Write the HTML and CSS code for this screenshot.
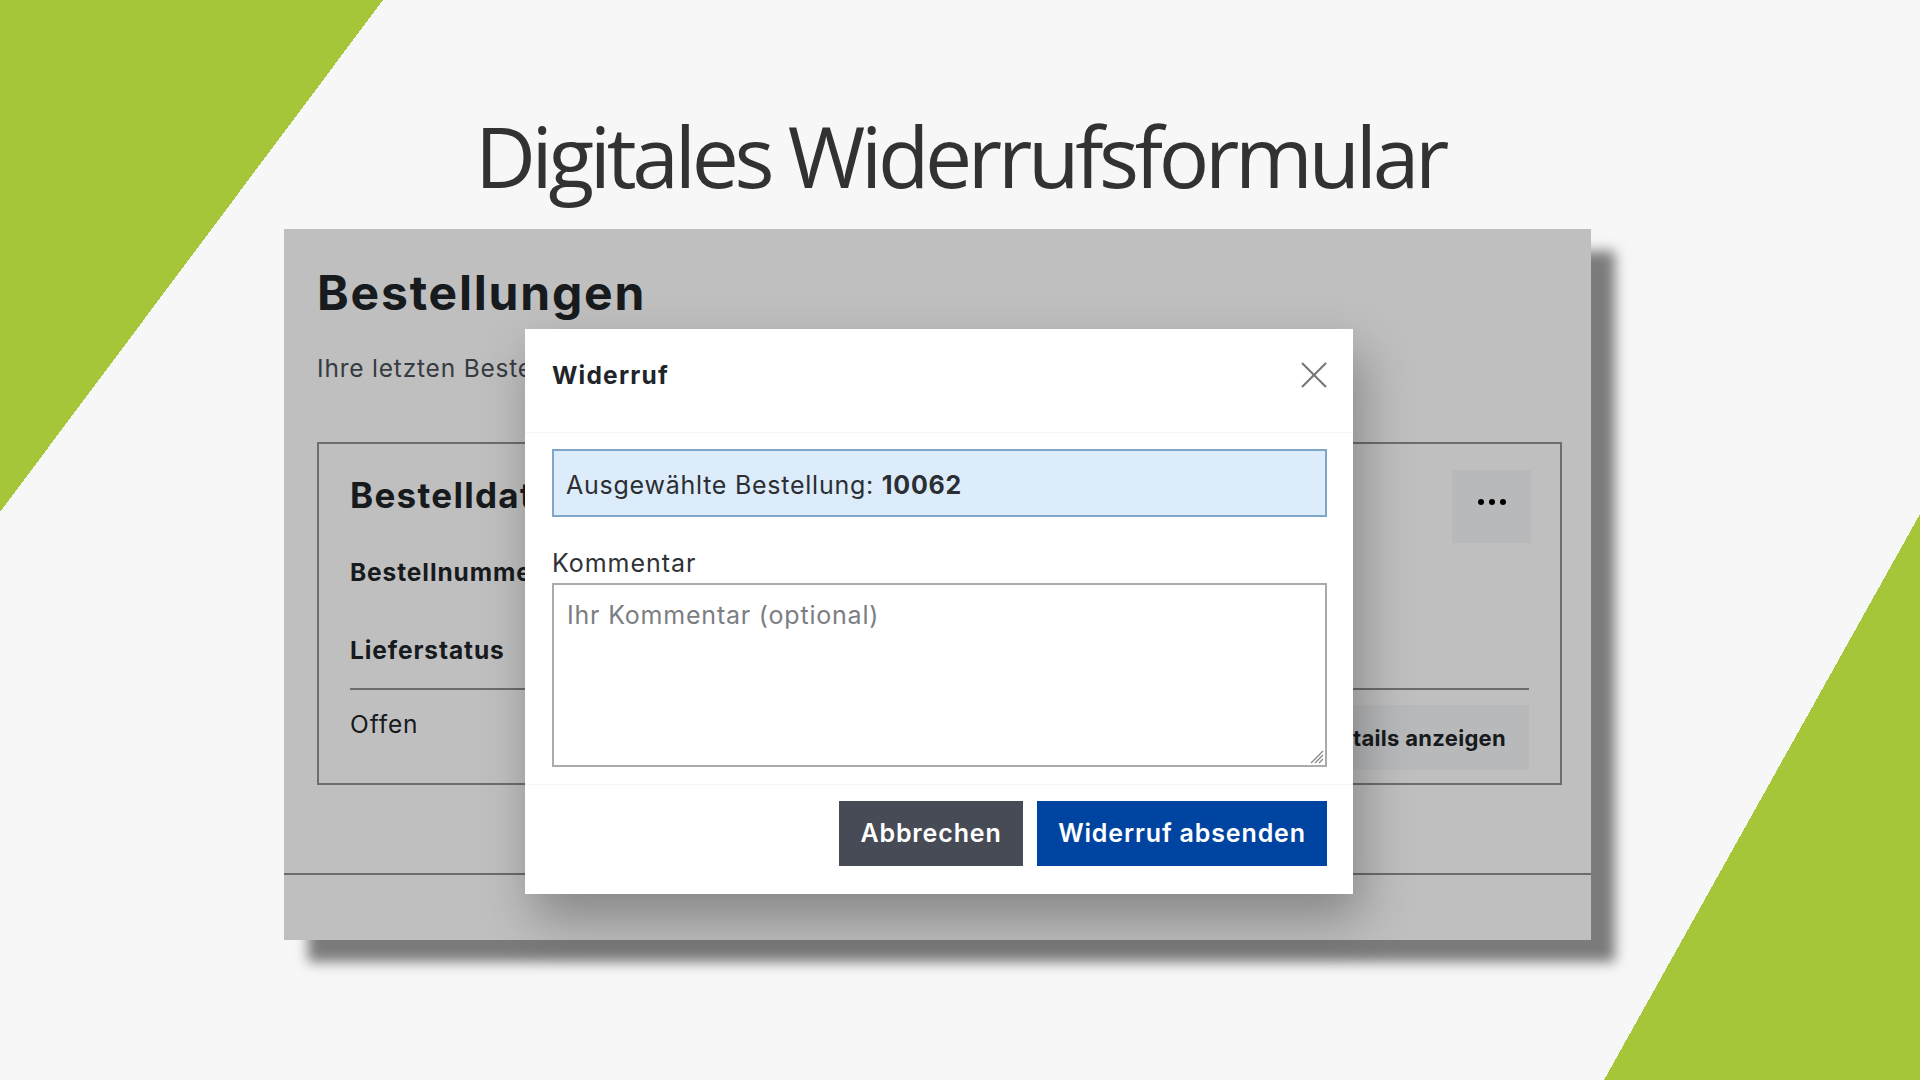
FILE: index.html
```html
<!DOCTYPE html>
<html lang="de">
<head>
<meta charset="utf-8">
<title>Digitales Widerrufsformular</title>
<link rel="stylesheet" href="styles.css">
</head>
<body>
<main class="stage">
  <h1 class="headline">Digitales Widerrufsformular</h1>
  <section class="app">
    <div class="app-body">
      <h2 class="app-title">Bestellungen</h2>
      <p class="app-lead">Ihre letzten Bestellungen im Überblick</p>
      <article class="order">
        <header class="order-head">
          <h3 class="order-date">Bestelldatum: 14.05.2024</h3>
          <button class="menu-btn" aria-label="Mehr"><span></span><span></span><span></span></button>
        </header>
        <div class="order-field first"><span class="order-label">Bestellnummer</span><span class="order-value">10062</span></div>
        <div class="order-field"><span class="order-label">Lieferstatus</span></div>
        <div class="order-foot">
          <span class="order-status">Offen</span>
          <button class="details-btn">Details anzeigen</button>
        </div>
      </article>
    </div>
    <footer class="app-foot"></footer>
    <div class="backdrop"></div>
    <div class="modal" role="dialog" aria-labelledby="mt">
      <div class="modal-head">
        <h4 class="modal-title" id="mt">Widerruf</h4>
        <button class="modal-close" aria-label="Schließen">
          <svg width="26" height="26" viewBox="0 0 26 26"><line x1="1" y1="1" x2="25" y2="25"/><line x1="25" y1="1" x2="1" y2="25"/></svg>
        </button>
      </div>
      <div class="modal-body">
        <div class="selected">Ausgewählte Bestellung: <strong>10062</strong></div>
        <label class="field-label" for="comment">Kommentar</label>
        <div class="field-wrap">
          <textarea id="comment" class="field-input" placeholder="Ihr Kommentar (optional)"></textarea>
          <svg class="grip" width="16" height="16" viewBox="0 0 16 16" aria-hidden="true"><line x1="15" y1="3" x2="3" y2="15"/><line x1="15" y1="7" x2="7" y2="15"/><line x1="15" y1="11" x2="11" y2="15"/></svg>
        </div>
      </div>
      <div class="modal-foot">
        <button class="btn btn-secondary">Abbrechen</button>
        <button class="btn btn-primary">Widerruf absenden</button>
      </div>
    </div>
  </section>
</main>
</body>
</html>
```
FILE: styles.css
```css
* { box-sizing: border-box; }
html, body { margin: 0; }
body {
  width: 1920px;
  height: 1080px;
  overflow: hidden;
  background-color: #f7f7f7;
  background-image:
    linear-gradient(to bottom right, #a6c63a 50%, rgba(166,198,58,0) 50%),
    linear-gradient(to top left, #a6c63a 50%, rgba(166,198,58,0) 50%);
  background-size: 383px 512px, 316px 566px;
  background-position: left top, right bottom;
  background-repeat: no-repeat;
  font-family: Inter, "Liberation Sans", sans-serif;
}
.stage { padding-top: 106px; }
.headline {
  margin: 0;
  text-align: center;
  font-family: "Open Sans", "Liberation Sans", sans-serif;
  font-weight: 400;
  font-size: 84px;
  line-height: 100px;
  letter-spacing: -4.3px;
  color: #323232;
}
.app {
  position: relative;
  width: 1307px;
  height: 711px;
  margin: 23px 0 0 284px;
  background: #fff;
  box-shadow: 24px 22px 12px rgba(0,0,0,.5);
  display: flex;
  flex-direction: column;
}
.app-body { flex: 1; padding: 37px 29px 0 33px; }
.app-title { margin: 0; font-size: 48px; line-height: 54px; font-weight: 700; letter-spacing: 1.8px; color: #212529; }
.app-lead { margin: 31px 0 0; font-size: 24.5px; line-height: 34.5px; letter-spacing: 0.8px; color: #495057; white-space: nowrap; }
.order {
  margin-top: 56.5px;
  height: 343px;
  border: 2px solid #929292;
  padding: 16px 31px 0 31px;
}
.order-head { display: flex; justify-content: space-between; align-items: flex-start; }
.order-date { margin: 15px 0 0; font-size: 35px; line-height: 40px; font-weight: 700; letter-spacing: 1.3px; color: #212529; white-space: nowrap; }
.menu-btn {
  margin: 10px -2px 0 0;
  width: 79px;
  height: 73px;
  border: 0;
  padding: 0 0 9px;
  background: #f6f7f8;
  display: flex;
  align-items: center;
  justify-content: center;
  gap: 5px;
}
.menu-btn span { width: 6px; height: 6px; border-radius: 50%; background: #000; }
.order-field {
  display: grid;
  grid-template-columns: 440px 1fr;
  font-size: 24.5px;
  line-height: 34.5px;
  letter-spacing: 0.9px;
  color: #212529;
}
.order-field.first { margin-top: 12px; }
.order-field + .order-field { margin-top: 43.5px; }
.order-label { font-weight: 700; }
.order-foot {
  margin-top: 20.5px;
  border-top: 2px solid #909090;
  padding-top: 17px;
  display: flex;
  justify-content: space-between;
  align-items: flex-start;
}
.order-status { font-size: 24.5px; line-height: 34.5px; letter-spacing: 0.9px; color: #212529; }
.details-btn {
  margin-top: -2px;
  height: 65px;
  padding: 0 23px;
  border: 0;
  background: #f6f7f8;
  font: 700 22px/1 Inter, "Liberation Sans", sans-serif;
  letter-spacing: 0.3px;
  color: #212529;
}
.app-foot { height: 67px; border-top: 2px solid #909090; }
.backdrop { position: absolute; inset: 0; background: rgba(0,0,0,.25); }
.modal {
  position: absolute;
  left: 241px;
  top: 100px;
  width: 828px;
  height: 565px;
  background: #fff;
  box-shadow: 8px 24px 48px rgba(0,0,0,.3);
  display: flex;
  flex-direction: column;
}
.modal-head {
  display: flex;
  justify-content: space-between;
  align-items: center;
  padding: 29px 26px 39px 27px;
  border-bottom: 1px solid #f6f6f7;
}
.modal-title { margin: 0; font-size: 24.5px; line-height: 34.5px; font-weight: 700; letter-spacing: 1.2px; color: #212529; }
.modal-close { width: 26px; height: 26px; padding: 0; border: 0; background: none; display: block; }
.modal-close svg { display: block; }
.modal-close line { stroke: #777; stroke-width: 2.2; }
.modal-body { padding: 16px 26px 0 27px; }
.selected {
  border: 2px solid #7fa6c6;
  background: #dcecfa;
  padding: 16px 12px 12px;
  font-size: 25px;
  line-height: 36px;
  letter-spacing: 0.75px;
  color: #2b2f33;
}
.selected strong { font-weight: 700; }
.field-label { display: block; margin-top: 28.5px; font-size: 25px; line-height: 36px; letter-spacing: 0.95px; color: #2f3236; }
.field-wrap { position: relative; margin-top: 2px; }
.field-input {
  display: block;
  width: 100%;
  height: 184px;
  margin: 0;
  border: 2px solid #ababab;
  border-radius: 0;
  padding: 12px 13px;
  font: 400 25px/36px Inter, "Liberation Sans", sans-serif;
  letter-spacing: 0.8px;
  color: #212529;
  resize: none;
}
.field-input::placeholder { color: #7b7e82; }
.grip { position: absolute; right: 3px; bottom: 3px; pointer-events: none; }
.grip line { stroke: #8a8a8a; stroke-width: 1.3; }
.modal-foot {
  margin-top: 17px;
  border-top: 1px solid #f6f6f7;
  padding: 16px 26px 27px 27px;
  display: flex;
  justify-content: flex-end;
  gap: 14px;
}
.btn {
  height: 65px;
  border: 0;
  padding: 0;
  font: 600 25px/1 Inter, "Liberation Sans", sans-serif;
  letter-spacing: 0.85px;
  color: #fff;
}
.btn-secondary { width: 184px; background: #474b55; }
.btn-primary { width: 290px; background: #0044a2; }
```
